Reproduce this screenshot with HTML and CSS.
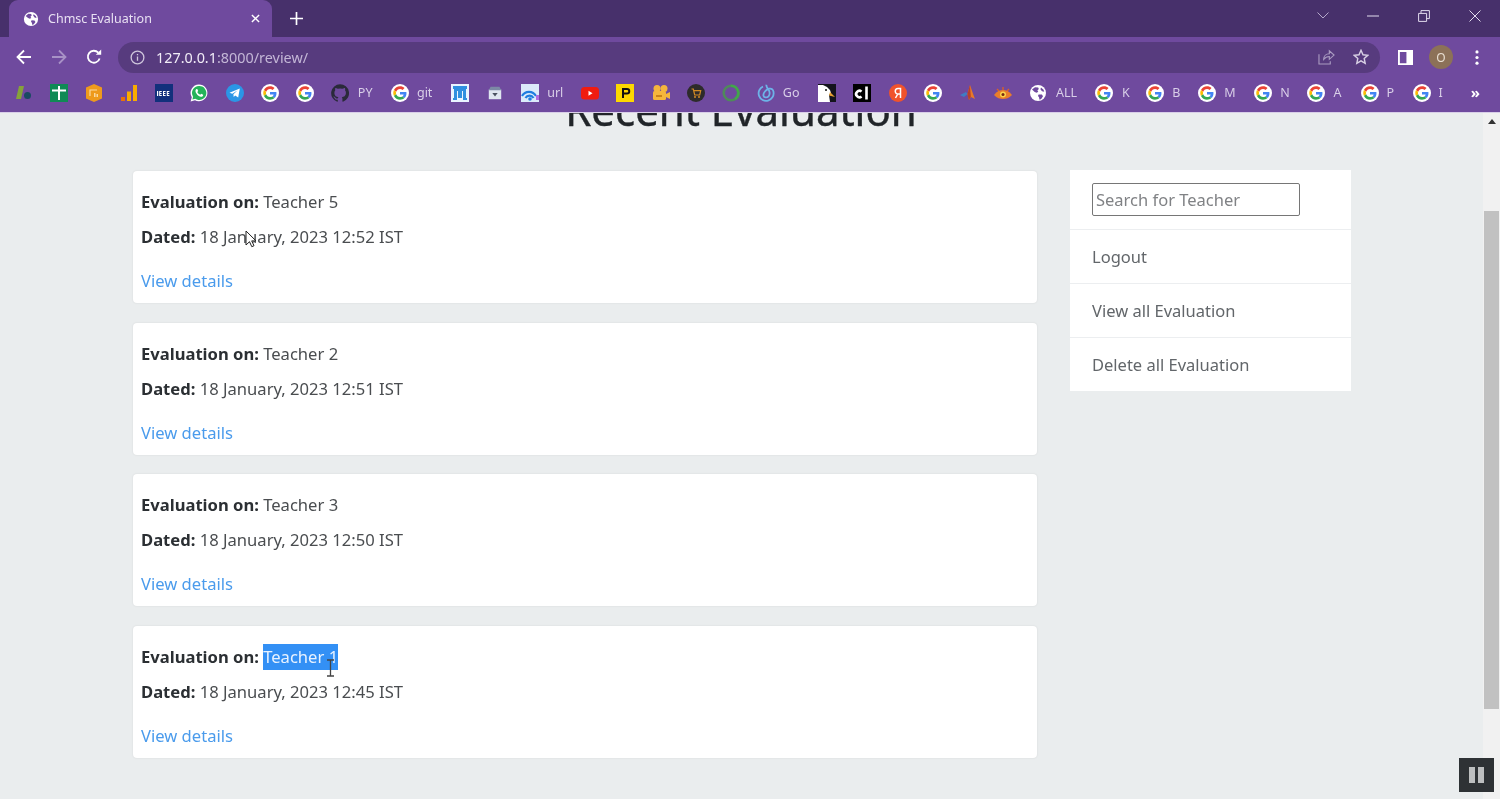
FILE: index.html
```html
<!DOCTYPE html>
<html lang="en">
<head>
<meta charset="utf-8">
<title>Chmsc Evaluation</title>
<link rel="stylesheet" href="styles.css">
</head>
<body>
<svg class="defs" width="0" height="0" aria-hidden="true">
  <symbol id="g" viewBox="-8 -8 64 64">
    <circle cx="24" cy="24" r="32" fill="#fff"/>
    <path fill="#EA4335" d="M24 9.5c3.54 0 6.71 1.22 9.21 3.6l6.85-6.85C35.9 2.38 30.47 0 24 0 14.62 0 6.51 5.38 2.56 13.22l7.98 6.19C12.43 13.72 17.74 9.5 24 9.5z"/>
    <path fill="#4285F4" d="M46.98 24.55c0-1.57-.15-3.09-.38-4.55H24v9.02h12.94c-.58 2.96-2.26 5.48-4.78 7.18l7.73 6c4.51-4.18 7.09-10.36 7.09-17.65z"/>
    <path fill="#FBBC05" d="M10.53 28.59c-.48-1.45-.76-2.99-.76-4.59s.27-3.14.76-4.59l-7.98-6.19C.92 16.46 0 20.12 0 24c0 3.88.92 7.54 2.56 10.78l7.97-6.19z"/>
    <path fill="#34A853" d="M24 48c6.48 0 11.93-2.13 15.89-5.81l-7.73-6c-2.15 1.45-4.92 2.3-8.16 2.3-6.26 0-11.57-4.22-13.47-9.91l-7.98 6.19C6.51 42.62 14.62 48 24 48z"/>
  </symbol>
  <symbol id="globe" viewBox="0 0 18 18">
    <circle cx="9" cy="9" r="8" fill="#fff"/>
    <path fill="#6f4a9e" d="M3 5.5 6 3.2l3.2.2.6 1.6-1.4 1.4.9 1.4-1.6 1-2-.8zM9.6 10.4l3.3.2 1.1 1.7-1.8 2.6-1.7.9-.5-2.6-1-1.2zM12 3.6l2.6 2.2.6 2-2.2-.6-1.600-2z"/>
  </symbol>
</svg>

<header class="chrome">
  <div class="tabstrip">
    <div class="tab">
      <svg class="tab-fav"><use href="#globe"/></svg>
      <span class="tab-title">Chmsc Evaluation</span>
      <svg class="tab-x" viewBox="0 0 10 10"><path d="M1 1l8 8M9 1 1 9"/></svg>
    </div>
    <svg class="newtab" viewBox="0 0 14 14"><path d="M7 0v14M0 7h14"/></svg>
    <div class="winctl">
      <svg class="wc-chev" viewBox="0 0 12 7"><path d="M.5.5 6 6 11.500.5"/></svg>
      <svg class="wc-min" viewBox="0 0 12 2"><path d="M0 1h12"/></svg>
      <svg class="wc-res" viewBox="0 0 12 12"><path d="M.6 3.400h8v8h-8zM3 3.400V.6h8.400v8H8.600"/></svg>
      <svg class="wc-close" viewBox="0 0 12 12"><path d="M.5.5l11 11M11.500.5l-11 11"/></svg>
    </div>
  </div>
  <div class="toolbar">
    <svg class="nav nav-back" viewBox="0 0 16 16"><path d="M15 8H2M8 1.500 1.500 8 8 14.500"/></svg>
    <svg class="nav nav-fwd" viewBox="0 0 16 16"><path d="M1 8h13M8 1.500 14.500 8 8 14.500"/></svg>
    <svg class="nav nav-reload" viewBox="0 0 16 16"><path d="M13.600 9.500A6 6 0 1 1 12.300 3.700"/><path class="solid" d="M9.800 5.800h5.400V.4z"/></svg>
    <div class="omnibox">
      <svg class="info" viewBox="0 0 16 16"><circle cx="8" cy="8" r="6.800"/><path d="M8 7v4.500M8 4.200v1.500"/></svg>
      <span class="url"><b>127.0.0.1</b>:8000/review/</span>
      <svg class="share" viewBox="0 0 18 17"><path d="M1 5.500V16h12v-3M6 11c0-3.500 2.500-6 6-6V2l5 4.500L12 11V8c-2.500 0-4.500 1-6 3z"/></svg>
      <svg class="star" viewBox="0 0 16 16"><path d="m8 1.300 2 4.500 4.800.5-3.600 3.200 1 4.800L8 11.800l-4.200 2.500 1-4.800L1.200 6.300 6 5.800z"/></svg>
    </div>
    <svg class="panel" viewBox="0 0 16 16"><path fill-rule="evenodd" d="M0 0h16v16H0zM2 2v12h7V2z"/></svg>
    <span class="avatar">O</span>
    <svg class="kebab" viewBox="0 0 4 16"><circle cx="2" cy="2" r="1.700"/><circle cx="2" cy="8" r="1.700"/><circle cx="2" cy="14" r="1.700"/></svg>
  </div>
  <nav class="bookmarks">
    <span class="bm"><svg viewBox="0 0 18 18"><path fill="#86a23a" d="M1 15 4 2h5L6 15z"/><circle cx="12.500" cy="11.500" r="3.500" fill="#1a4a62"/></svg></span>
    <span class="bm"><svg viewBox="0 0 18 18"><path fill="#0f8a55" d="M0 0h18v18H0z"/><path fill="#fff" d="M2 5.500h14v2h-6V16H8V7.500H2zM8 2h2v4H8z"/></svg></span>
    <span class="bm"><svg viewBox="0 0 18 18"><path fill="#ee9a1c" d="M9 0l8 3.500v11L9 18l-8-3.500v-11z"/><path fill="none" stroke="#fbd9a0" stroke-width="1.200" d="M5 12V6h7"/><path fill="#fbd9a0" d="M9 9h1.500v4H9zM11.500 10H13v3h-1.500z"/></svg></span>
    <span class="bm"><svg viewBox="0 0 18 18"><path fill="#e8710a" d="M1 13h4v4H1z"/><path fill="#f9ab00" d="M7 7.500h4V17H7zM13 1h4v16h-4z"/></svg></span>
    <span class="bm"><svg viewBox="0 0 18 18"><path fill="#12307c" d="M0 0h18v18H0z"/><path fill="#fff" d="M2 7h1.200v5H2zM4.200 7h2.600v1H5.200v1h1.400v1H5.200v1h1.600v1H4.200zM8 7h2.600v1H9v1h1.400v1H9v1h1.600v1H8zM11.800 7h2.600v1h-1.600v1h1.400v1h-1.400v1h1.600v1h-2.600z"/></svg></span>
    <span class="bm"><svg viewBox="0 0 18 18"><path fill="#fff" d="M9 .5a8.400 8.400 0 0 0-7.200 12.700L.6 17.500l4.400-1.200A8.400 8.400 0 1 0 9 .5z"/><path fill="#25b35a" d="M9 2a7 7 0 0 0-5.900 10.700l-.7 2.800 2.900-.8A7 7 0 1 0 9 2z"/><path fill="#fff" d="M6.700 5c-.8.300-1.300 1.200-1.200 2.200.3 2.300 2.800 5 5.300 5.600 1 .2 2-.3 2.300-1.200l.1-.8-2-1-.9 1c-1.300-.4-2.400-1.500-3-2.800l.9-1-.9-2z"/></svg></span>
    <span class="bm"><svg viewBox="0 0 18 18"><circle cx="9" cy="9" r="9" fill="#2b96e6"/><path fill="#fff" d="M3.500 8.800 13.800 4.600l-1.600 9-3-2.200-1.500 1.500-.3-2.600 4.300-4-5.400 3.400z"/></svg></span>
    <span class="bm"><svg><use href="#g"/></svg></span>
    <span class="bm"><svg><use href="#g"/></svg></span>
    <span class="bm"><svg viewBox="0 0 18 18"><path fill="#2a2a3a" d="M9 .2a9 9 0 0 0-2.800 17.500c.4.100.6-.2.600-.4v-1.600c-2.500.5-3-1.200-3-1.200-.4-1-1-1.300-1-1.300-.8-.6.100-.6.100-.6.900.1 1.400.9 1.400.9.800 1.400 2.100 1 2.600.8.100-.6.300-1 .6-1.200-2-.2-4.100-1-4.100-4.400 0-1 .4-1.800.9-2.400-.1-.2-.4-1.100.1-2.400 0 0 .8-.2 2.500.9a8.600 8.600 0 0 1 4.500 0c1.700-1.100 2.500-.9 2.500-.9.500 1.300.2 2.200.1 2.400.6.600.9 1.400.9 2.400 0 3.400-2.100 4.200-4.100 4.400.3.300.6.800.6 1.700v2.500c0 .2.200.5.600.4A9 9 0 0 0 9 .2z"/></svg><i class="lbl lbl-py">PY</i></span>
    <span class="bm"><svg><use href="#g"/></svg><i class="lbl lbl-git">git</i></span>
    <span class="bm"><svg viewBox="0 0 18 18"><path fill="#eaf4ff" d="M0 0h18v18H0z"/><path fill="#2f8fe0" d="M2 2h14v3h-1v9h1v2h-4V7h-1v7H7V7H6v9H2v-2h1V5H2z"/></svg></span>
    <span class="bm"><svg class="store" viewBox="0 0 18 18"><path fill="#dfe6f0" d="M2 5h14v11H2z"/><path fill="#7c89a5" d="M4 2h10l2 4H2z"/><path fill="#4a5160" d="m6 9h6l-3 4z"/></svg></span>
    <span class="bm"><svg viewBox="0 0 18 18"><path fill="#dcebfa" d="M0 0h18v18H0z"/><path fill="none" stroke="#1f7de0" stroke-width="2.200" d="M1 12a8 8 0 0 1 14 0M4.500 14a4.600 4.600 0 0 1 8 0"/><circle cx="9" cy="15" r="1.800" fill="#1f7de0"/><path fill="#b06be0" d="M15 11h3v5h-3z"/></svg><i class="lbl lbl-url">url</i></span>
    <span class="bm"><svg viewBox="0 0 18 18"><rect y="3" width="18" height="12.500" rx="3.500" fill="#f01c10"/><path fill="#fff" d="m7.500 6.800 4 2.500-4 2.400z"/></svg></span>
    <span class="bm"><svg viewBox="0 0 18 18"><path fill="#fdd800" d="M0 0h18v18H0z"/><path fill="#111" fill-rule="evenodd" d="M6 4h5a3.200 3.200 0 0 1 0 6.500H8V14H6zm2 2v2.500h3a1.200 1.200 0 0 0 0-2.500z"/></svg></span>
    <span class="bm"><svg viewBox="0 0 18 18"><circle cx="5" cy="4.500" r="3.500" fill="#f5b53c"/><circle cx="12" cy="4.500" r="3.500" fill="#f5b53c"/><rect x="1" y="7" width="13" height="9" rx="1.500" fill="#f5b53c"/><path fill="#f5b53c" d="m14 10 4-2v7l-4-2z"/><path fill="#c98018" d="M4 11h6v2H4z"/></svg></span>
    <span class="bm"><svg viewBox="0 0 18 18"><circle cx="9" cy="9" r="9" fill="#2d2b2b"/><path fill="none" stroke="#d18a24" stroke-width="1.200" d="M4.500 5h1.800l1.400 6h5l1-4.300H6.800"/><circle cx="8" cy="13" r="1" fill="#d18a24"/><circle cx="12" cy="13" r="1" fill="#d18a24"/></svg></span>
    <span class="bm"><svg viewBox="0 0 18 18"><circle cx="9" cy="9" r="7.300" fill="none" stroke="#4f8a5a" stroke-width="2.600"/><path fill="none" stroke="#43a54c" stroke-width="2.600" d="M9 1.700a7.300 7.300 0 0 1 4 13.400"/></svg></span>
    <span class="bm"><svg viewBox="0 0 18 18"><path fill="none" stroke="#6db3e8" stroke-width="1.800" d="M6 2.500A7.500 7.500 0 1 0 16.500 8c-.2-2.500-2-3.800-4.200-3.300C9 5.500 5.800 9 6.500 11.800c.5 2 3.500 2.200 5 .5 1.800-2 1.300-5.500-.5-7.500-1.200-1.300-2-2.500-1.500-4"/></svg><i class="lbl lbl-go">Go</i></span>
    <span class="bm"><svg viewBox="0 0 18 18"><path fill="#14141c" d="M0 0h18v18H0z"/><path fill="#fff" d="M0 1h5l4 2 3 3 1 3-2 2 1 7H0z"/><path fill="#e8a030" d="m12 8 5 5-6-1.500z"/><circle cx="8" cy="6" r="1" fill="#111"/></svg></span>
    <span class="bm"><svg viewBox="0 0 18 18"><path fill="#000" d="M0 0h18v18H0z"/><path fill="none" stroke="#fff" stroke-width="2.600" d="M8.500 7.600a3.200 3.200 0 1 0 0 4.800M13.500 2.500v13"/></svg></span>
    <span class="bm"><svg viewBox="0 0 18 18"><circle cx="9" cy="9" r="9" fill="#f0532c"/><path fill="none" stroke="#fff" stroke-width="1.500" d="M11.500 14V4.500H9a2.600 2.600 0 0 0 0 5.500h2.500M8.800 10 6.500 14"/></svg></span>
    <span class="bm"><svg><use href="#g"/></svg></span>
    <span class="bm"><svg viewBox="0 0 18 18"><path fill="#3f7cc4" d="m1 11 6-3 1.500 2L5 13z"/><path fill="#e87a28" d="M11 1c1.500 4 3 9 5 14l-4-2-2 3-1.500-6z"/><path fill="#b8402a" d="m11 1 .8 12-2 3L8.500 10z"/></svg></span>
    <span class="bm"><svg viewBox="0 0 18 18"><path fill="none" stroke="#d8602a" stroke-width="1.400" d="M3 5 5 7M9 3v3M15 5l-2 2"/><path fill="#ea7d2a" d="M0 11c3-4 6-5 9-5s6 1 9 5c-3 3-6 4-9 4s-6-1-9-4z"/><circle cx="9" cy="10.500" r="3" fill="#fbd34a"/><circle cx="9" cy="10.500" r="1.500" fill="#7a2810"/></svg></span>
    <span class="bm"><svg><use href="#globe"/></svg><i class="lbl lbl-all">ALL</i></span>
    <span class="bm"><svg><use href="#g"/></svg><i class="lbl lbl-k">K</i></span>
    <span class="bm"><svg><use href="#g"/></svg><i class="lbl lbl-b">B</i></span>
    <span class="bm"><svg><use href="#g"/></svg><i class="lbl lbl-m">M</i></span>
    <span class="bm"><svg><use href="#g"/></svg><i class="lbl lbl-n">N</i></span>
    <span class="bm"><svg><use href="#g"/></svg><i class="lbl lbl-a">A</i></span>
    <span class="bm"><svg><use href="#g"/></svg><i class="lbl lbl-p">P</i></span>
    <span class="bm"><svg><use href="#g"/></svg><i class="lbl lbl-i">I</i></span>
    <span class="more">»</span>
  </nav>
</header>

<div class="viewport">
  <main class="page">
    <h1 class="title">Recent Evaluation</h1>
    <div class="columns">
      <section class="list">
        <article class="card">
          <p class="line"><b>Evaluation on:</b> Teacher 5</p>
          <p class="line"><b>Dated:</b> 18 January, 2023 12:52 IST</p>
          <a class="details">View details</a>
        </article>
        <article class="card">
          <p class="line"><b>Evaluation on:</b> Teacher 2</p>
          <p class="line"><b>Dated:</b> 18 January, 2023 12:51 IST</p>
          <a class="details">View details</a>
        </article>
        <article class="card">
          <p class="line"><b>Evaluation on:</b> Teacher 3</p>
          <p class="line"><b>Dated:</b> 18 January, 2023 12:50 IST</p>
          <a class="details">View details</a>
        </article>
        <article class="card">
          <p class="line"><b>Evaluation on:</b> <span class="sel">Teacher 1</span></p>
          <p class="line"><b>Dated:</b> 18 January, 2023 12:45 IST</p>
          <a class="details">View details</a>
        </article>
      </section>
      <aside class="side">
        <div class="side-item side-search"><input class="search" type="text" placeholder="Search for Teacher"></div>
        <a class="side-item">Logout</a>
        <a class="side-item">View all Evaluation</a>
        <a class="side-item">Delete all Evaluation</a>
      </aside>
    </div>
  </main>
  <div class="scrollbar">
    <svg class="sb-up" viewBox="0 0 8 5"><path d="M4 0 8 5H0z"/></svg>
    <div class="sb-thumb"></div>
  </div>
  <svg class="cursor-arrow" viewBox="0 0 12 18"><path d="M1 1v14l3.500-3.300 2.300 5 2.200-1-2.300-4.800H11z"/></svg>
  <svg class="cursor-ibeam" viewBox="0 0 9 18"><path d="M1 1h7M4.500 1v16M1 17h7"/></svg>
  <div class="pause"><span></span><span></span></div>
</div>
</body>
</html>
```
FILE: styles.css
```css
* { box-sizing: border-box; }
html, body { margin: 0; height: 100%; overflow: hidden; }
body { display: flex; flex-direction: column; height: 799px; font-family: "Noto Sans", "Open Sans", sans-serif; background: #eaedee; }
.defs { position: absolute; }
svg { display: block; flex: none; }

.chrome { flex: none; height: 113px; background: #6f4a9e; color: #fff; border-bottom: 1px solid #d9cfe8; filter: blur(.4px); }
.tabstrip { display: flex; align-items: center; height: 37px; background: #47306b; padding-left: 9px; }
.tab { display: flex; align-items: center; width: 263px; height: 37px; background: #6f4a9e; border-radius: 9px 9px 0 0; padding: 0 12px 0 14px; }
.tab-fav { width: 16px; height: 16px; }
.tab-title { margin-left: 9px; flex: 1; font-size: 12.500px; color: #e9e1f3; white-space: nowrap; }
.tab-x { width: 9px; height: 9px; fill: none; stroke: #fff; stroke-width: 1.600; }
.newtab { width: 13px; height: 13px; margin-left: 18px; fill: none; stroke: #fff; stroke-width: 1.800; }
.winctl { margin-left: auto; display: flex; align-items: center; padding-right: 19px; height: 30px; margin-top: -6px; }
.winctl svg { fill: none; stroke: #e2dbee; stroke-width: 1; }
.wc-chev { width: 12px; height: 7px; margin-right: 38px; stroke: #b5a8ca !important; }
.wc-min { width: 12px; height: 2px; margin-right: 39px; }
.wc-res { width: 12px; height: 12px; margin-right: 39px; }
.wc-close { width: 12px; height: 12px; }

.toolbar { display: flex; align-items: center; height: 36px; margin-top: 2px; padding-left: 16px; }
.nav { width: 16px; height: 16px; fill: none; stroke: #fff; stroke-width: 1.800; }
.nav-fwd { margin-left: 19px; stroke: #a892c6; }
.nav-reload { margin-left: 19px; }
.nav-reload .solid { fill: #fff; stroke: none; }
.omnibox { display: flex; align-items: center; width: 1262px; height: 31px; margin-left: 16px; padding: 0 11px 0 12px; background: #573b7e; border-radius: 16px; }
.info { width: 15px; height: 15px; fill: none; stroke: #cfc6dc; stroke-width: 1.400; }
.url { margin-left: 11px; flex: 1; font-size: 14.400px; color: #c3b6d6; white-space: nowrap; }
.url b { font-weight: 400; color: #f1ecf7; }
.share { width: 17px; height: 16px; margin-right: 18px; fill: none; stroke: #a99bc0; stroke-width: 1.200; }
.star { width: 16px; height: 16px; fill: none; stroke: #d9d1e5; stroke-width: 1.400; }
.panel { width: 15px; height: 15px; margin-left: 18px; fill: #fff; }
.avatar { width: 24px; height: 24px; margin-left: 16px; border-radius: 50%; background: #8c7158; color: #e9dfd2; font-size: 12px; display: flex; align-items: center; justify-content: center; }
.kebab { width: 4px; height: 15px; margin-left: 22px; fill: #fff; }

.bookmarks { display: flex; align-items: center; height: 37px; padding: 0 0 2px 15px; gap: 17.100px; }
.bm { display: flex; align-items: center; flex: none; }
.bm svg { width: 18px; height: 18px; }
.bm svg.store { width: 16px; height: 16px; margin: 1px; }
.lbl { font-style: normal; font-size: 12.500px; color: #d9cfe8; white-space: nowrap; }
.lbl-py { margin-left: 9px; width: 16px; }
.lbl-git { margin-left: 8px; width: 17px; }
.lbl-url { margin-left: 8px; width: 17px; }
.lbl-go { margin-left: 8px; width: 18.500px; }
.lbl-all { margin-left: 9px; width: 22px; }
.lbl-k { margin-left: 9px; width: 7px; }
.lbl-b { margin-left: 8px; width: 9px; }
.lbl-m { margin-left: 8px; width: 13px; }
.lbl-n { margin-left: 8px; width: 10px; }
.lbl-a { margin-left: 8px; width: 10px; }
.lbl-p { margin-left: 8px; width: 9px; }
.lbl-i { margin-left: 8px; width: 3px; }
.more { margin-left: 12px; font-size: 15px; line-height: 1; color: #fff; font-weight: 700; }

.viewport { position: relative; flex: 1; display: flex; min-height: 0; overflow: hidden; filter: blur(.3px); }
.page { flex: 1; min-width: 0; padding: 0 132px 0 133px; }
.title { margin: -27px 0 0; font-size: 42px; line-height: 48px; font-weight: 400; text-align: center; color: #212529; height: 48px; padding-right: 2px; -webkit-text-stroke: .4px #212529; }
.columns { display: flex; align-items: flex-start; gap: 33px; margin-top: 37px; }
.list { width: 904px; flex: none; display: flex; flex-direction: column; gap: 19.500px; }
.card { background: #fff; height: 132px; border-radius: 4px; padding: 18px 8px 0; font-size: 16.600px; color: #4a4d50; box-shadow: 0 0 2px rgba(0,0,0,.1); }
.line { margin: 0 0 9px; line-height: 26px; }
.line b { font-weight: 700; color: #2b2f33; }
.sel { background: #3390f5; color: #e8f2ff; display: inline-block; }
.details { display: block; margin-top: 18px; line-height: 26px; color: #4a9bec; }
.side { width: 281px; flex: none; background: #fff; margin-top: -1px; font-size: 16.500px; color: #62666a; }
.side-item { display: flex; align-items: center; height: 54px; padding: 0 22px; border-bottom: 1px solid #eceef0; }
.side-item:last-child { border-bottom: 0; height: 53px; }
.side-search { height: 60px; align-items: flex-start; padding-top: 13px; }
.search { width: 208px; height: 33px; padding: 0 3px; border: 1px solid #767676; border-radius: 2px; font: inherit; background: #fff; color: #333; outline: 0; }
.search::placeholder { color: #808285; opacity: 1; }

.scrollbar { flex: none; width: 17px; background: #f1f1f1; position: relative; padding-top: 6px; }
.sb-up { width: 8px; height: 5px; margin-left: 5px; fill: #333; }
.sb-thumb { margin: 87px 1px 0; height: 498px; width: 15px; background: #c1c1c1; }
.cursor-arrow { position: absolute; left: 245px; top: 117px; width: 12px; height: 18px; fill: #fff; stroke: #222; stroke-width: 1; }
.cursor-ibeam { position: absolute; left: 326px; top: 546px; width: 9px; height: 18px; fill: none; stroke: #444; stroke-width: 1.300; }
.pause { position: absolute; right: 6px; bottom: 7px; width: 35px; height: 34px; background: #2e3235; display: flex; align-items: center; justify-content: center; gap: 3px; }
.pause span { width: 6px; height: 16px; background: #bdbfc0; }
```
